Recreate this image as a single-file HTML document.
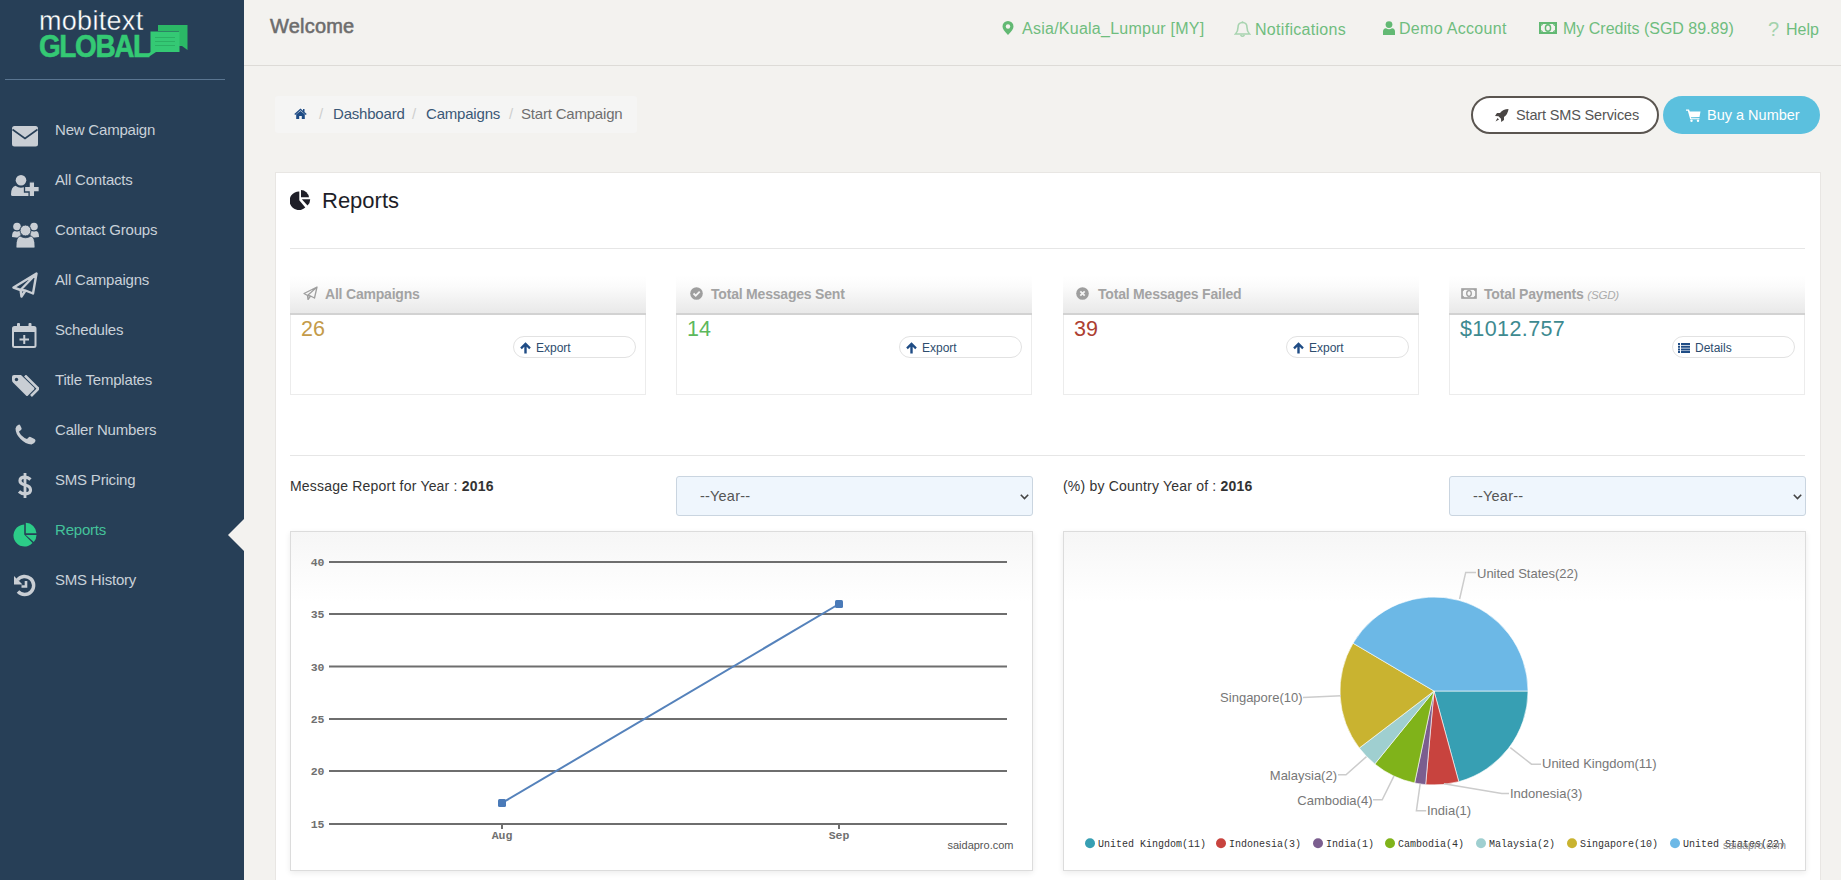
<!DOCTYPE html>
<html><head><meta charset="utf-8">
<style>
*{box-sizing:border-box;margin:0;padding:0}
html,body{width:1841px;height:880px;overflow:hidden}
body{background:#f3f2ef;font-family:"Liberation Sans",sans-serif;position:relative}
.abs{position:absolute}
#side{left:0;top:0;width:244px;height:880px;background:#273f57}
.logo1{left:39px;top:6px;color:#fff;font-size:27px;letter-spacing:0.3px;font-weight:normal;-webkit-text-stroke:0.35px #273f57}
.logo2{left:39px;top:29px;color:#34c974;font-size:31px;font-weight:bold;letter-spacing:-1.5px;transform:scaleX(0.9);transform-origin:0 0;-webkit-text-stroke:0.6px #34c974}
#side hr{position:absolute;left:5px;top:79px;width:220px;border:0;border-top:1px solid #5a7590}
.mi{left:55px;color:#c9d1d9;font-size:15px;white-space:nowrap;letter-spacing:-0.2px}
.mi.act{color:#44c39b}
.ic{left:12px}
#tri{left:228px;top:519px;width:0;height:0;border-top:16px solid transparent;border-bottom:16px solid transparent;border-right:16px solid #f3f2ef}
#hdr{left:244px;top:0;width:1597px;height:66px;border-bottom:1px solid #dddbd7}
.welcome{left:270px;top:15px;font-size:20px;color:#6c6c6c;font-weight:normal;-webkit-text-stroke:0.55px #6c6c6c;letter-spacing:0.2px}
.nav{top:20px;color:#6fbd7e;font-size:16px;white-space:nowrap}
.bc{left:275px;top:96px;width:362px;height:37px;background:#f5f5f4;border-radius:3px}
.bct{top:105px;font-size:15px;white-space:nowrap}
.btn1{left:1471px;top:96px;width:188px;height:38px;border:2px solid #5a5550;border-radius:19px;background:#fff;color:#555;font-size:15px}
.btn2{left:1663px;top:96px;width:157px;height:38px;border-radius:19px;background:#5bc0de;color:#fff;font-size:15px}
#panel{left:275px;top:172px;width:1546px;height:720px;background:#fff;border:1px solid #e8e6e3}
.hr{height:1px;background:#e6e6e6}
.box{top:269px;width:356px;height:126px;border:1px solid #ececec;border-top-color:#f8f8f8;background:#fff}
.boxh{position:absolute;left:0;top:0;right:0;height:46px;background:linear-gradient(#fff 15%,#fbfbfb 40%,#e9e9e9);border-bottom:2px solid #d2d2d2;margin:-1px -1px 0 -1px}
.boxt{position:absolute;left:35px;top:17px;font-size:14px;font-weight:bold;color:#a3a3a3;white-space:nowrap;letter-spacing:-0.2px}
.val{position:absolute;left:10px;top:47px;font-size:21.5px}
.exp{position:absolute;left:222px;top:66px;width:123px;height:22px;border:1px solid #e2e2e2;border-radius:12px;font-size:12px;color:#2e4d6e}
.lbl{top:478px;font-size:14px;color:#333;white-space:nowrap;letter-spacing:0.2px}
.sel{top:476px;width:357px;height:40px;background:#eff6fd;border:1px solid #cad5e0;border-radius:3px;font-size:14.5px;color:#555;letter-spacing:0.2px}
.chart{top:531px;width:743px;height:340px;border:1px solid #dcdcdc;background:linear-gradient(#f6f6f6,#fff 70px);box-shadow:0 2px 6px rgba(0,0,0,0.08)}
</style></head><body>
<div id="side" class="abs">
  <div class="abs logo1">mobitext</div>
  <div class="abs logo2">GLOBAL</div>
  <svg class="abs" style="left:146px;top:24px" width="44" height="34" viewBox="0 0 44 34"><path d="M12 1 L41.5 1 L41.5 26 L36 22 L33 22 L33 7 L12 7 Z" fill="#2bb866"/><path d="M4.5 7.5 L33.5 7.5 L33.5 28 L10 28 L4 32 L0.5 32 L2 30 L4.5 28 Z" fill="#34c974"/><path d="M9 13.5 H29 M9 17.5 H29 M9 21.5 H29" stroke="#2bb064" stroke-width="1.2"/></svg>
  <hr>
  <div class="abs mi" style="top:121px">New Campaign</div>
  <svg class="abs" style="left:12px;top:126px" width="26" height="21" viewBox="0 0 26 21"><rect x="0" y="0" width="26" height="20.5" rx="2.5" fill="#c9ced4"/><path d="M0.5 3.5 L13 12.5 L25.5 3.5" stroke="#273f57" stroke-width="1.6" fill="none"/></svg>
  <div class="abs mi" style="top:171px">All Contacts</div>
  <svg class="abs" style="left:11px;top:175px" width="29" height="22" viewBox="0 0 29 22" overflow="visible"><circle cx="10" cy="5.2" r="5.3" fill="#c9ced4"/><path d="M0 19.5 Q0 12 4.5 10.8 Q10 14.5 15.5 10.8 Q19.5 11.8 20 16 L20 21 L1.5 21 Q0 21 0 19.5Z" fill="#c9ced4"/><path d="M18.1 6.8 L23.7 6.8 L23.7 11.4 L28.3 11.4 L28.3 17.0 L23.7 17.0 L23.7 21.6 L18.1 21.6 L18.1 17.0 L13.5 17.0 L13.5 11.4 L18.1 11.4 Z" fill="#c9ced4" stroke="#273f57" stroke-width="1.3"/></svg>
  <div class="abs mi" style="top:221px">Contact Groups</div>
  <svg class="abs" style="left:12px;top:222px" width="27" height="26" viewBox="0 0 27 26"><circle cx="5" cy="4.5" r="3.8" fill="#c9ced4"/><circle cx="22" cy="4.5" r="3.8" fill="#c9ced4"/><path d="M0 15 Q0 9 3 9 Q5 10 7 9 L9 9 L8 16 Z" fill="#c9ced4"/><path d="M27 15 Q27 9 24 9 Q22 10 20 9 L18 9 L19 16 Z" fill="#c9ced4"/><circle cx="13.5" cy="8.5" r="5.5" stroke="#273f57" stroke-width="1" fill="#c9ced4"/><path d="M4 25 Q4 15 8 14 Q13.5 17.5 19 14 Q23 15 23 25 Q23 26 22 26 L5 26 Q4 26 4 25Z" fill="#c9ced4" stroke="#273f57" stroke-width="0.8"/></svg>
  <div class="abs mi" style="top:271px">All Campaigns</div>
  <svg class="abs" style="left:12px;top:272px" width="26" height="26" viewBox="0 0 26 26"><path d="M1.5 15.5 L24.5 1.5 L21 21.5 L13.5 18.5 L9.5 24.5 L8.5 18 Z M8.5 18 L24 2 M13.5 18.5 L8.5 18" stroke="#c9ced4" stroke-width="2.4" fill="none" stroke-linejoin="round"/></svg>
  <div class="abs mi" style="top:321px">Schedules</div>
  <svg class="abs" style="left:12px;top:323px" width="25" height="25" viewBox="0 0 25 25"><rect x="1" y="4" width="22.5" height="20" rx="1.5" fill="none" stroke="#c9ced4" stroke-width="2"/><rect x="1" y="4" width="22.5" height="5" fill="#c9ced4"/><rect x="5" y="0" width="3" height="6" rx="1" fill="#c9ced4"/><rect x="16.5" y="0" width="3" height="6" rx="1" fill="#c9ced4"/><path d="M12.25 12 V21 M7.5 16.5 H17" stroke="#c9ced4" stroke-width="2"/></svg>
  <div class="abs mi" style="top:371px">Title Templates</div>
  <svg class="abs" style="left:12px;top:375px" width="27" height="22" viewBox="0 0 27 22"><path d="M0 2 Q0 0 2 0 L9 0 L22 12.5 Q23 13.5 22 14.5 L16 20.5 Q15 21.5 14 20.5 L1 7.5 Q0 6.5 0 5 Z" fill="#c9ced4"/><circle cx="4.5" cy="4.5" r="1.7" fill="#273f57"/><path d="M13 0.5 L25.5 13 Q26.5 13.5 25.5 14.5 L19 21" stroke="#c9ced4" stroke-width="2.6" fill="none"/></svg>
  <div class="abs mi" style="top:421px">Caller Numbers</div>
  <svg class="abs" style="left:15px;top:424px" width="21" height="21" viewBox="0 0 21 21"><path d="M4 0.5 Q1 1.5 0.5 4.5 Q0.5 10 5.5 15 Q10.5 20 16.5 20.5 Q19.5 20 20.5 17 Q20.5 15.5 19.5 15 L15.5 13 Q14.5 12.5 13.5 13.5 L12 15 Q9 14 6 11 Q4 8 4 7.5 L6 6 Q7 5 6.5 4 L5 1 Q4.5 0.3 4 0.5Z" fill="#c9ced4"/></svg>
  <div class="abs mi" style="top:471px">SMS Pricing</div>
  <svg class="abs" style="left:17px;top:472px" width="16" height="27" viewBox="0 0 16 27"><path d="M8 1 V26" stroke="#c9ced4" stroke-width="2.8"/><path d="M13.5 7.5 Q11 5.2 8 5.2 Q3 5.2 3 8.8 Q3 11.8 8 13 Q13.5 14.2 13.5 18 Q13.5 21.8 8 21.8 Q4.5 21.8 2 19.5" stroke="#c9ced4" stroke-width="3.2" fill="none"/></svg>
  <div class="abs mi act" style="top:521px">Reports</div>
  <svg class="abs" style="left:12px;top:522px" width="26" height="26" viewBox="0 0 26 26"><path d="M12.2 2.5 A11 11 0 1 0 20.5 21 L12.2 12.5 Z" fill="#2ccc88"/><path d="M13.8 0.8 A11 11 0 0 1 24.5 11.3 L13.8 11.3 Z" fill="#2ccc88"/><path d="M13.8 12.9 L24.5 12.9 A11 11 0 0 1 21.8 20 Z" fill="#2ccc88"/></svg>
  <div class="abs mi" style="top:571px">SMS History</div>
  <svg class="abs" style="left:13px;top:574px" width="24" height="23" viewBox="0 0 24 23"><path d="M4.5 6 A9 9 0 1 1 5 17.5" stroke="#c9ced4" stroke-width="3.4" fill="none"/><path d="M1 2 L1 10.5 L9.5 10.5 Z" fill="#c9ced4"/><path d="M13 7 V12.5 H8.5" stroke="#c9ced4" stroke-width="2.6" fill="none"/></svg>
</div>
<div id="tri" class="abs"></div>
<div id="hdr" class="abs"></div>
<div class="abs welcome">Welcome</div>
<svg class="abs" style="left:1002px;top:21px" width="12" height="14" viewBox="0 0 12 14"><path d="M6 0 A5.5 5.5 0 0 0 0.5 5.5 Q0.5 8.5 6 14 Q11.5 8.5 11.5 5.5 A5.5 5.5 0 0 0 6 0Z" fill="#62b973"/><circle cx="6" cy="5.5" r="2.2" fill="#f3f2ef"/></svg>
<div class="abs nav" style="left:1022px;letter-spacing:0.25px">Asia/Kuala_Lumpur [MY]</div>
<svg class="abs" style="left:1234px;top:21px" width="17" height="16" viewBox="0 0 17 16"><path d="M8.5 1.5 Q4 1.5 4 6.5 Q4 10.5 1.5 13 L15.5 13 Q13 10.5 13 6.5 Q13 1.5 8.5 1.5Z" fill="none" stroke="#a8d4b0" stroke-width="1.6"/><path d="M6.5 14 Q8.5 16.5 10.5 14" fill="none" stroke="#a8d4b0" stroke-width="1.4"/><circle cx="8.5" cy="1.2" r="1" fill="#a8d4b0"/></svg>
<div class="abs nav" style="left:1255px;top:21px;letter-spacing:0.3px">Notifications</div>
<svg class="abs" style="left:1383px;top:21px" width="12" height="14" viewBox="0 0 12 14"><circle cx="6" cy="3.6" r="3.4" fill="#62b973"/><path d="M0 14 L0 10.5 Q0 7.5 3 7.3 Q6 9 9 7.3 Q12 7.5 12 10.5 L12 14Z" fill="#62b973"/></svg>
<div class="abs nav" style="left:1399px;letter-spacing:0.3px">Demo Account</div>
<svg class="abs" style="left:1539px;top:22px" width="18" height="12" viewBox="0 0 18 12"><rect x="1" y="1" width="16" height="10" fill="none" stroke="#62b973" stroke-width="2"/><ellipse cx="9" cy="6" rx="2.6" ry="3.2" fill="none" stroke="#62b973" stroke-width="1.4"/><path d="M1 3.5 Q3.5 3.5 3.5 1 M17 3.5 Q14.5 3.5 14.5 1 M1 8.5 Q3.5 8.5 3.5 11 M17 8.5 Q14.5 8.5 14.5 11" fill="none" stroke="#62b973" stroke-width="1.2"/></svg>
<div class="abs nav" style="left:1563px">My Credits (SGD 89.89)</div>
<div class="abs nav" style="left:1768px;top:18px;color:#a3d2ac;font-size:20px">?</div>
<div class="abs nav" style="left:1786px;top:21px">Help</div>
<div class="abs bc"></div>
<svg class="abs" style="left:294px;top:108px" width="13" height="11" viewBox="0 0 13 11"><path d="M6.5 0.5 L0.3 6 L1.2 7 L6.5 2.3 L11.8 7 L12.7 6 L10.5 4 L10.5 1 L9 1 L9 2.7 Z" fill="#1f4c85"/><path d="M2.2 6.2 L6.5 2.9 L10.8 6.2 L10.8 11 L7.8 11 L7.8 8 L5.2 8 L5.2 11 L2.2 11Z" fill="#1f4c85"/></svg>
<div class="abs bct" style="left:319px;color:#cfcfcf">/</div>
<div class="abs bct" style="left:333px;color:#3a5876;letter-spacing:-0.2px">Dashboard</div>
<div class="abs bct" style="left:412px;color:#cfcfcf">/</div>
<div class="abs bct" style="left:426px;color:#3a5876;letter-spacing:-0.2px">Campaigns</div>
<div class="abs bct" style="left:509px;color:#cfcfcf">/</div>
<div class="abs bct" style="left:521px;color:#6f6f6f;letter-spacing:-0.2px">Start Campaign</div>
<div class="abs btn1"></div>
<svg class="abs" style="left:1495px;top:109px" width="14" height="13" viewBox="0 0 14 13"><path d="M13.5 0 Q8 0.2 5 4 L2 4 L0 7 L3.5 7.2 L6 9.7 L6.2 13 L9 11 L9 8 Q13 5 13.5 0Z" fill="#4a4644"/><path d="M2.5 9 L0.5 12.5 L4 10.5Z" fill="#4a4644"/></svg>
<div class="abs" style="left:1516px;top:107px;font-size:14.5px;color:#555;white-space:nowrap;letter-spacing:-0.15px">Start SMS Services</div>
<div class="abs btn2"></div>
<svg class="abs" style="left:1686px;top:109px" width="15" height="13" viewBox="0 0 15 13"><path d="M0 0.5 L3 0.5 L3.8 2.5 L14.5 2.5 L13.5 8 L4.8 8.2 L5.2 9.3 L13.5 9.3 L13.5 10.3 L4.2 10.3 L1.8 1.8 L0 1.8Z" fill="#fff"/><circle cx="5.5" cy="11.8" r="1.2" fill="#fff"/><circle cx="12" cy="11.8" r="1.2" fill="#fff"/></svg>
<div class="abs" style="left:1707px;top:107px;font-size:14.5px;color:#fff;white-space:nowrap">Buy a Number</div>
<div id="panel" class="abs"></div>
<svg class="abs" style="left:290px;top:190px" width="21" height="20" viewBox="0 0 21 20"><path d="M9.3 1.5 A9.3 9.3 0 1 0 15.3 17.5 L9.3 10.3 Z" fill="#1f1f28"/><path d="M11 0 A8.3 8.3 0 0 1 19 7.3 L11 7.3 Z" fill="#1f1f28"/><path d="M11.8 9.2 L20.2 9.2 A8.5 8.5 0 0 1 17.5 15.5 Z" fill="#1f1f28"/></svg>
<div class="abs" style="left:322px;top:188px;font-size:22px;color:#1e1e28">Reports</div>
<div class="abs hr" style="left:290px;top:248px;width:1515px"></div>
<div class="abs box" style="left:290px"><div class="boxh"><svg style="position:absolute;left:13px;top:17px" width="15" height="14" viewBox="0 0 15 14"><path d="M1 7.5 L14 1 L11.5 12 L7.5 10 L5 13.5 L4.5 9.5 Z M4.5 9.5 L13.5 1.5 M7.5 10 L4.5 9.5" stroke="#9e9e9e" stroke-width="1.3" fill="none" stroke-linejoin="round"/></svg><div class="boxt">All Campaigns</div></div><div class="val" style="color:#c49b4a;">26</div><div class="exp"><svg style="position:absolute;left:6px;top:5px" width="11" height="12" viewBox="0 0 11 12"><path d="M5.5 0.3 L0.2 5.6 L1.8 7.2 L4.3 4.7 L4.3 11.5 L6.7 11.5 L6.7 4.7 L9.2 7.2 L10.8 5.6Z" fill="#1f4c85"/></svg><span style="position:absolute;left:22px;top:4px">Export</span></div></div>
<div class="abs box" style="left:676px"><div class="boxh"><svg style="position:absolute;left:14px;top:18px" width="13" height="13" viewBox="0 0 13 13"><circle cx="6.5" cy="6.5" r="6.3" fill="#9e9e9e"/><path d="M3.5 6.5 L5.7 8.7 L9.7 4.6" stroke="#f4f4f4" stroke-width="1.8" fill="none"/></svg><div class="boxt">Total Messages Sent</div></div><div class="val" style="color:#5cb85c;">14</div><div class="exp"><svg style="position:absolute;left:6px;top:5px" width="11" height="12" viewBox="0 0 11 12"><path d="M5.5 0.3 L0.2 5.6 L1.8 7.2 L4.3 4.7 L4.3 11.5 L6.7 11.5 L6.7 4.7 L9.2 7.2 L10.8 5.6Z" fill="#1f4c85"/></svg><span style="position:absolute;left:22px;top:4px">Export</span></div></div>
<div class="abs box" style="left:1063px"><div class="boxh"><svg style="position:absolute;left:13px;top:18px" width="13" height="13" viewBox="0 0 13 13"><circle cx="6.5" cy="6.5" r="6.3" fill="#9e9e9e"/><path d="M4.3 4.3 L8.7 8.7 M8.7 4.3 L4.3 8.7" stroke="#f4f4f4" stroke-width="1.8" fill="none"/></svg><div class="boxt">Total Messages Failed</div></div><div class="val" style="color:#ad4030;">39</div><div class="exp"><svg style="position:absolute;left:6px;top:5px" width="11" height="12" viewBox="0 0 11 12"><path d="M5.5 0.3 L0.2 5.6 L1.8 7.2 L4.3 4.7 L4.3 11.5 L6.7 11.5 L6.7 4.7 L9.2 7.2 L10.8 5.6Z" fill="#1f4c85"/></svg><span style="position:absolute;left:22px;top:4px">Export</span></div></div>
<div class="abs box" style="left:1449px"><div class="boxh"><svg style="position:absolute;left:12px;top:19px" width="16" height="11" viewBox="0 0 16 11"><rect x="1" y="1" width="14" height="9" fill="none" stroke="#9e9e9e" stroke-width="1.6"/><ellipse cx="8" cy="5.5" rx="2.3" ry="2.8" fill="none" stroke="#9e9e9e" stroke-width="1.3"/><path d="M1 3 Q3 3 3 1 M15 3 Q13 3 13 1 M1 8 Q3 8 3 10 M15 8 Q13 8 13 10" fill="none" stroke="#9e9e9e" stroke-width="1"/></svg><div class="boxt">Total Payments <i style="font-weight:normal;font-size:11.5px;color:#ababab">(SGD)</i></div></div><div class="val" style="color:#3e8a90;letter-spacing:0.4px;">$1012.757</div><div class="exp"><svg style="position:absolute;left:5px;top:6px" width="12" height="10" viewBox="0 0 12 10"><path d="M0 0h2v2h-2z M3 0h9v2h-9z M0 2.7h2v2h-2z M3 2.7h9v2h-9z M0 5.4h2v2h-2z M3 5.4h9v2h-9z M0 8.1h2v1.9h-2z M3 8.1h9v1.9h-9z" fill="#1f4c85"/></svg><span style="position:absolute;left:22px;top:4px">Details</span></div></div>
<div class="abs hr" style="left:290px;top:455px;width:1515px"></div>
<div class="abs lbl" style="left:290px">Message Report for Year : <b>2016</b></div>
<div class="abs sel" style="left:676px"><span style="position:absolute;left:23px;top:11px">--Year--</span><svg style="position:absolute;left:343px;top:17px" width="9" height="6" viewBox="0 0 9 6"><path d="M0.8 0.8 L4.5 4.5 L8.2 0.8" stroke="#444" stroke-width="1.6" fill="none"/></svg></div>
<div class="abs lbl" style="left:1063px">(%) by Country Year of : <b>2016</b></div>
<div class="abs sel" style="left:1449px"><span style="position:absolute;left:23px;top:11px">--Year--</span><svg style="position:absolute;left:343px;top:17px" width="9" height="6" viewBox="0 0 9 6"><path d="M0.8 0.8 L4.5 4.5 L8.2 0.8" stroke="#444" stroke-width="1.6" fill="none"/></svg></div>
<div class="abs chart" style="left:290px"></div>
<div class="abs chart" style="left:1063px"></div>
<svg class="abs" style="left:290px;top:531px" width="743" height="340" viewBox="290 531 743 340"><line x1="329" y1="562" x2="1007" y2="562" stroke="#6e6e6e" stroke-width="2"/><text x="324.5" y="566" text-anchor="end" font-family="Liberation Mono" font-weight="bold" font-size="11.5" fill="#707070">40</text><line x1="329" y1="614" x2="1007" y2="614" stroke="#6e6e6e" stroke-width="2"/><text x="324.5" y="618" text-anchor="end" font-family="Liberation Mono" font-weight="bold" font-size="11.5" fill="#707070">35</text><line x1="329" y1="666.5" x2="1007" y2="666.5" stroke="#6e6e6e" stroke-width="2"/><text x="324.5" y="670.5" text-anchor="end" font-family="Liberation Mono" font-weight="bold" font-size="11.5" fill="#707070">30</text><line x1="329" y1="719" x2="1007" y2="719" stroke="#6e6e6e" stroke-width="2"/><text x="324.5" y="723" text-anchor="end" font-family="Liberation Mono" font-weight="bold" font-size="11.5" fill="#707070">25</text><line x1="329" y1="771" x2="1007" y2="771" stroke="#6e6e6e" stroke-width="2"/><text x="324.5" y="775" text-anchor="end" font-family="Liberation Mono" font-weight="bold" font-size="11.5" fill="#707070">20</text><line x1="329" y1="824" x2="1007" y2="824" stroke="#6e6e6e" stroke-width="2"/><text x="324.5" y="828" text-anchor="end" font-family="Liberation Mono" font-weight="bold" font-size="11.5" fill="#707070">15</text><line x1="502" y1="824" x2="502" y2="829" stroke="#6e6e6e" stroke-width="2"/><text x="502" y="839" text-anchor="middle" font-family="Liberation Mono" font-weight="bold" font-size="11.5" fill="#707070">Aug</text><line x1="839" y1="824" x2="839" y2="829" stroke="#6e6e6e" stroke-width="2"/><text x="839" y="839" text-anchor="middle" font-family="Liberation Mono" font-weight="bold" font-size="11.5" fill="#707070">Sep</text><line x1="502" y1="803" x2="839" y2="604" stroke="#5582bb" stroke-width="2"/><rect x="498" y="799" width="8" height="8" rx="1.5" fill="#4a7ab8"/><rect x="835" y="600" width="8" height="8" rx="1.5" fill="#4a7ab8"/><text x="1013.5" y="849" text-anchor="end" font-family="Liberation Sans" font-size="11" fill="#555">saidapro.com</text></svg>
<svg class="abs" style="left:1063px;top:531px" width="743" height="340" viewBox="1063 531 743 340"><path d="M1434 691 L1528.00 691.00 A94 94 0 0 1 1458.78 781.68 Z" fill="#379fb3" stroke="#fff" stroke-width="0.6" stroke-linejoin="round"/><path d="M1434 691 L1458.78 781.68 A94 94 0 0 1 1425.65 784.63 Z" fill="#c8433e" stroke="#fff" stroke-width="0.6" stroke-linejoin="round"/><path d="M1434 691 L1425.65 784.63 A94 94 0 0 1 1414.64 782.98 Z" fill="#7b5e8f" stroke="#fff" stroke-width="0.6" stroke-linejoin="round"/><path d="M1434 691 L1414.64 782.98 A94 94 0 0 1 1374.77 763.99 Z" fill="#80b31a" stroke="#fff" stroke-width="0.6" stroke-linejoin="round"/><path d="M1434 691 L1374.77 763.99 A94 94 0 0 1 1359.28 748.04 Z" fill="#9fcfd0" stroke="#fff" stroke-width="0.6" stroke-linejoin="round"/><path d="M1434 691 L1359.28 748.04 A94 94 0 0 1 1353.06 643.20 Z" fill="#c9b330" stroke="#fff" stroke-width="0.6" stroke-linejoin="round"/><path d="M1434 691 L1353.06 643.20 A94 94 0 0 1 1528.00 691.00 Z" fill="#6cb8e6" stroke="#fff" stroke-width="0.6" stroke-linejoin="round"/><path d="M1459.6 599 L1465.7 572.4 L1476 572.4" stroke="#cccccc" stroke-width="1.5" fill="none"/><text x="1477" y="578" text-anchor="start" font-family="Liberation Sans" font-size="13" fill="#777">United States(22)</text><path d="M1341 695.8 L1303 697.5" stroke="#cccccc" stroke-width="1.5" fill="none"/><text x="1302.5" y="702" text-anchor="end" font-family="Liberation Sans" font-size="13" fill="#777">Singapore(10)</text><path d="M1366.5 756.6 L1346 774.7 L1338 774.7" stroke="#cccccc" stroke-width="1.5" fill="none"/><text x="1337" y="779.6" text-anchor="end" font-family="Liberation Sans" font-size="13" fill="#777">Malaysia(2)</text><path d="M1393.9 776.2 L1382.2 799.8 L1373 799.8" stroke="#cccccc" stroke-width="1.5" fill="none"/><text x="1372.5" y="804.5" text-anchor="end" font-family="Liberation Sans" font-size="13" fill="#777">Cambodia(4)</text><path d="M1420.2 783.7 L1416.4 810.8 L1426.2 810.8" stroke="#cccccc" stroke-width="1.5" fill="none"/><text x="1427" y="814.7" text-anchor="start" font-family="Liberation Sans" font-size="13" fill="#777">India(1)</text><path d="M1443.9 783.7 L1501.8 793.6 L1509 793.6" stroke="#cccccc" stroke-width="1.5" fill="none"/><text x="1510" y="797.8" text-anchor="start" font-family="Liberation Sans" font-size="13" fill="#777">Indonesia(3)</text><path d="M1510.3 747.7 L1531.5 764.2 L1541 764.2" stroke="#cccccc" stroke-width="1.5" fill="none"/><text x="1542" y="768.4" text-anchor="start" font-family="Liberation Sans" font-size="13" fill="#777">United Kingdom(11)</text><circle cx="1090" cy="843.3" r="5" fill="#379fb3"/><text x="1098" y="847" font-family="Liberation Mono" font-size="10" fill="#333">United Kingdom(11)</text><circle cx="1221" cy="843.3" r="5" fill="#c8433e"/><text x="1229" y="847" font-family="Liberation Mono" font-size="10" fill="#333">Indonesia(3)</text><circle cx="1318" cy="843.3" r="5" fill="#7b5e8f"/><text x="1326" y="847" font-family="Liberation Mono" font-size="10" fill="#333">India(1)</text><circle cx="1390" cy="843.3" r="5" fill="#80b31a"/><text x="1398" y="847" font-family="Liberation Mono" font-size="10" fill="#333">Cambodia(4)</text><circle cx="1481" cy="843.3" r="5" fill="#9fcfd0"/><text x="1489" y="847" font-family="Liberation Mono" font-size="10" fill="#333">Malaysia(2)</text><circle cx="1572" cy="843.3" r="5" fill="#c9b330"/><text x="1580" y="847" font-family="Liberation Mono" font-size="10" fill="#333">Singapore(10)</text><circle cx="1675" cy="843.3" r="5" fill="#6cb8e6"/><text x="1683" y="847" font-family="Liberation Mono" font-size="10" fill="#333">United States(22)</text><text x="1786" y="849" text-anchor="end" font-family="Liberation Sans" font-size="10.5" fill="#888">saidapro.com</text></svg>
</body></html>
